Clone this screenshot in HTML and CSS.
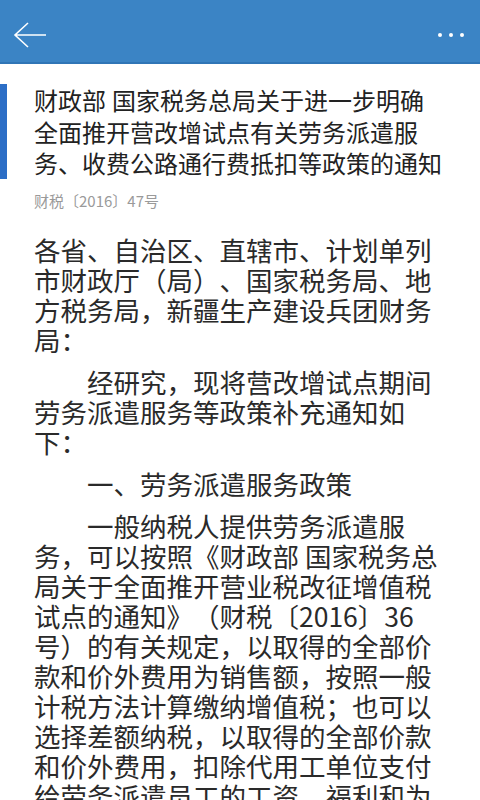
FILE: index.html
```html
<!DOCTYPE html>
<html lang="zh-CN">
  <head>
    <meta charset="UTF-8" />
    <meta name="viewport" content="width=device-width, initial-scale=1.0" />
    <title>通知</title>

    <link rel="stylesheet" href="styles.css">
  </head>
  <body>
    <header class="topBar">
      <span class="topBar__back">
        <svg width="34" height="28" viewBox="0 0 34 28">
          <path d="M15 2 L2 14 L15 26 M2 14 H33" fill="none" stroke="#ffffff" stroke-width="1.6" />
        </svg>
      </span>
      <span class="topBar__more">
        <i></i><i></i><i></i>
      </span>
    </header>

    <div class="article">
      <div class="article__head">
        <h1 class="article__title">财政部&#8197;国家税务总局关于进一步明确全面推开营改增试点有关劳务派遣服务、收费公路通行费抵扣等政策的通知</h1>
        <p class="article__code">财税〔2016〕47号</p>
      </div>

      <div class="article__body">
        <p class="noIndent">各省、自治区、直辖市、计划单列市财政厅（局）、国家税务局、地方税务局，新疆生产建设兵团财务局：</p>
        <p>经研究，现将营改增试点期间劳务派遣服务等政策补充通知如下：</p>
        <p>一、劳务派遣服务政策</p>
        <p>一般纳税人提供劳务派遣服务，可以按照《财政部 国家税务总局关于全面推开营业税改征增值税试点的通知》（财税〔2016〕36号）的有关规定，以取得的全部价款和价外费用为销售额，按照一般计税方法计算缴纳增值税；也可以选择差额纳税，以取得的全部价款和价外费用，扣除代用工单位支付给劳务派遣员工的工资、福利和为其办理社会保险及住房公积金后的余额为销售额。</p>
      </div>
    </div>
  </body>
</html>
```

FILE: styles.css
```css
body {
  margin: 0;
  background-color: #ffffff;
  font-family: "Noto Sans CJK SC", "Noto Sans", sans-serif;
  text-spacing-trim: space-all;
  overflow: hidden;
}

.topBar {
  display: flex;
  align-items: center;
  justify-content: space-between;
  height: 62px;
  padding: 0 16px 0 13px;
  background-color: #3b84c5;
  border-bottom: 2px solid #3075b6;
}

.topBar__back {
  display: flex;
  margin-top: 8px;
}

.topBar__more {
  display: flex;
  gap: 7px;
  margin-top: 8px;
}

.topBar__more i {
  display: block;
  width: 4px;
  height: 4px;
  border-radius: 50%;
  background-color: #ffffff;
}

.article__head {
  padding-top: 20px;
}

.article__title {
  margin: 0;
  padding: 0 34px 0 27px;
  border-left: 7px solid #2c6ec6;
  font-size: 24px;
  font-weight: 400;
  line-height: 31.5px;
  color: #222222;
}

.article__code {
  margin: 0;
  padding: 12px 34px 0 34px;
  font-size: 15px;
  line-height: 20px;
  color: #9a9a9a;
}

.article__body {
  padding: 24px 36px 0 34px;
  font-size: 26.5px;
  line-height: 30px;
  color: #2a2a2a;
}

.article__body p {
  margin: 0 0 12px 0;
  text-indent: 2em;
}

.article__body p.noIndent {
  text-indent: 0;
}
```
